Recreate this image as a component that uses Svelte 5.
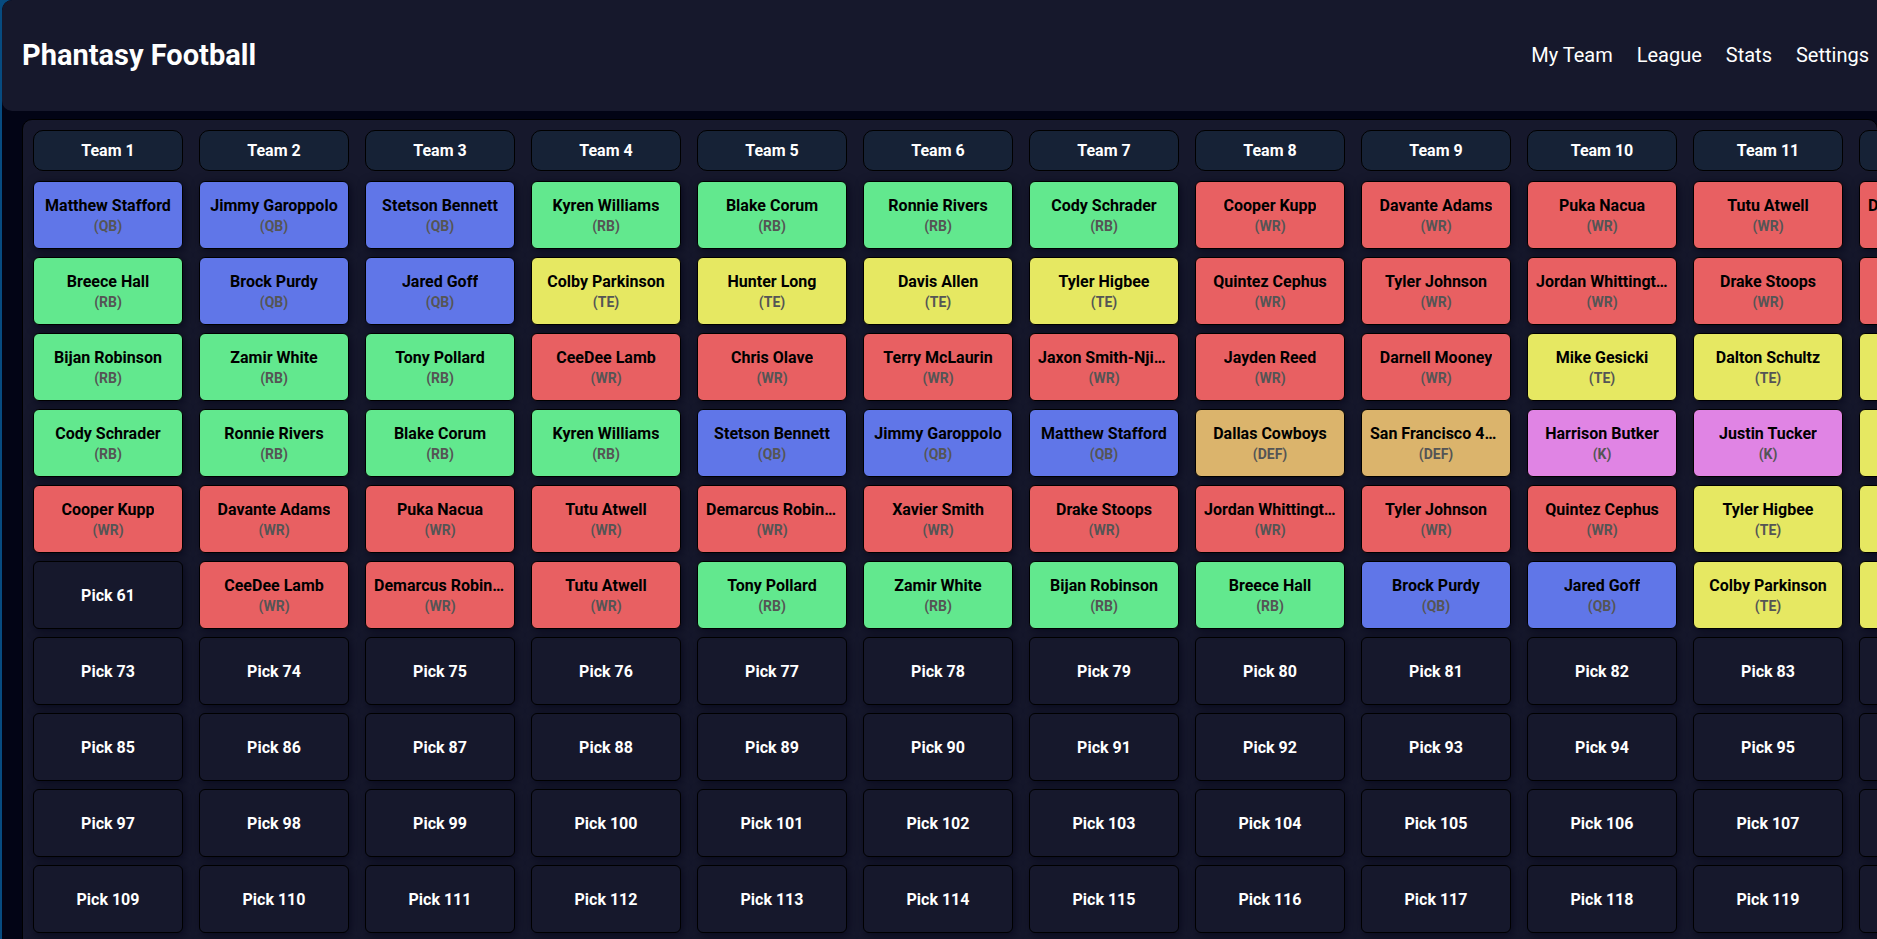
<script>
  const links = ['My Team', 'League', 'Stats', 'Settings'];

  const teams = Array.from({ length: 12 }, (_, i) => `Team ${i + 1}`);

  const drafted = [
    ['Matthew Stafford|QB', 'Jimmy Garoppolo|QB', 'Stetson Bennett|QB', 'Kyren Williams|RB', 'Blake Corum|RB', 'Ronnie Rivers|RB', 'Cody Schrader|RB', 'Cooper Kupp|WR', 'Davante Adams|WR', 'Puka Nacua|WR', 'Tutu Atwell|WR', 'Demarcus Robinson|WR'],
    ['Breece Hall|RB', 'Brock Purdy|QB', 'Jared Goff|QB', 'Colby Parkinson|TE', 'Hunter Long|TE', 'Davis Allen|TE', 'Tyler Higbee|TE', 'Quintez Cephus|WR', 'Tyler Johnson|WR', 'Jordan Whittington|WR', 'Drake Stoops|WR', 'Xavier Smith|WR'],
    ['Bijan Robinson|RB', 'Zamir White|RB', 'Tony Pollard|RB', 'CeeDee Lamb|WR', 'Chris Olave|WR', 'Terry McLaurin|WR', 'Jaxon Smith-Njigba|WR', 'Jayden Reed|WR', 'Darnell Mooney|WR', 'Mike Gesicki|TE', 'Dalton Schultz|TE', 'Cole Kmet|TE'],
    ['Cody Schrader|RB', 'Ronnie Rivers|RB', 'Blake Corum|RB', 'Kyren Williams|RB', 'Stetson Bennett|QB', 'Jimmy Garoppolo|QB', 'Matthew Stafford|QB', 'Dallas Cowboys|DEF', 'San Francisco 49ers|DEF', 'Harrison Butker|K', 'Justin Tucker|K', 'Evan Engram|TE'],
    ['Cooper Kupp|WR', 'Davante Adams|WR', 'Puka Nacua|WR', 'Tutu Atwell|WR', 'Demarcus Robinson|WR', 'Xavier Smith|WR', 'Drake Stoops|WR', 'Jordan Whittington|WR', 'Tyler Johnson|WR', 'Quintez Cephus|WR', 'Tyler Higbee|TE', 'Davis Allen|TE'],
    [null, 'CeeDee Lamb|WR', 'Demarcus Robinson|WR', 'Tutu Atwell|WR', 'Tony Pollard|RB', 'Zamir White|RB', 'Bijan Robinson|RB', 'Breece Hall|RB', 'Brock Purdy|QB', 'Jared Goff|QB', 'Colby Parkinson|TE', 'Hunter Long|TE']
  ];

  const rounds = Array.from({ length: 15 }, (_, r) =>
    teams.map((_, t) => {
      const entry = drafted[r]?.[t];
      const [name, position] = entry ? entry.split('|') : [];
      return { pick: r * teams.length + t + 1, name, position };
    })
  );
</script>

<div class="app">
  <header>
    <h1>Phantasy Football</h1>
    <nav>
      {#each links as link}
        <a href="#{link.toLowerCase().replace(' ', '-')}">{link}</a>
      {/each}
    </nav>
  </header>

  <main>
    <table>
      <thead>
        <tr>
          {#each teams as team}
            <th scope="col"><div class="team">{team}</div></th>
          {/each}
        </tr>
      </thead>
      <tbody>
        {#each rounds as round}
          <tr>
            {#each round as slot}
              <td>
                <div class="slot {slot.position ?? ''}">
                  {#if slot.name}
                    <span class="name">{slot.name}</span>
                    <span class="position">({slot.position})</span>
                  {:else}
                    <span class="pick">Pick {slot.pick}</span>
                  {/if}
                </div>
              </td>
            {/each}
          </tr>
        {/each}
      </tbody>
    </table>
  </main>
</div>

<style>
  :global(body) {
    background: #074b80;
  }

  .app {
    height: 100vh;
    margin-left: 2px;
    overflow: hidden;
    border-radius: 10px 0 0 0;
    background: #020415;
    color: #fff;
    font-family: Roboto, sans-serif;
  }

  header {
    display: flex;
    align-items: center;
    justify-content: space-between;
    box-sizing: border-box;
    height: 111px;
    padding: 0 8px 2px 20px;
    border-radius: 10px 0 0 10px;
    background: #16182c;
  }

  h1 {
    margin: 0;
    font-size: 29px;
    line-height: 36px;
    font-weight: 700;
  }

  nav {
    display: flex;
    gap: 24px;
  }

  a {
    color: #fff;
    font-size: 20px;
    line-height: 28px;
    text-decoration: none;
  }

  main {
    margin: 8px -1px 0 20px;
    border: 1px solid #000;
    border-radius: 10px;
    background: #16182c;
  }

  table {
    table-layout: fixed;
    width: 1992px;
    margin: 0 2px;
    border-spacing: 0;
    padding-top: 10px;
  }

  th,
  td {
    width: 166px;
    padding: 0 8px 8px;
    box-sizing: border-box;
  }

  th {
    padding-bottom: 10px;
  }

  .team {
    box-sizing: border-box;
    height: 41px;
    border: 1px solid #000;
    border-radius: 10px;
    background: #162236;
    font-size: 16px;
    line-height: 39px;
    font-weight: 700;
    text-align: center;
  }

  .slot {
    display: flex;
    flex-direction: column;
    align-items: center;
    justify-content: center;
    box-sizing: border-box;
    height: 68px;
    padding: 2px 8px 0;
    border: 1px solid #000;
    border-radius: 6px;
    background: #16182c;
    box-shadow: 2px 2px 10px rgba(0, 0, 20, 0.6);
    font-size: 16px;
    line-height: 24px;
    font-weight: 700;
  }

  .name {
    max-width: 100%;
    overflow: hidden;
    color: #000;
    line-height: 20px;
    text-overflow: ellipsis;
    white-space: nowrap;
  }

  .position {
    color: #555;
    font-size: 14px;
    line-height: 20px;
  }

  .QB { background: #6076e8; }
  .RB { background: #62e88e; }
  .WR { background: #e86062; }
  .TE { background: #e6e862; }
  .K { background: #e084e4; }
  .DEF { background: #dbb46c; }
</style>
